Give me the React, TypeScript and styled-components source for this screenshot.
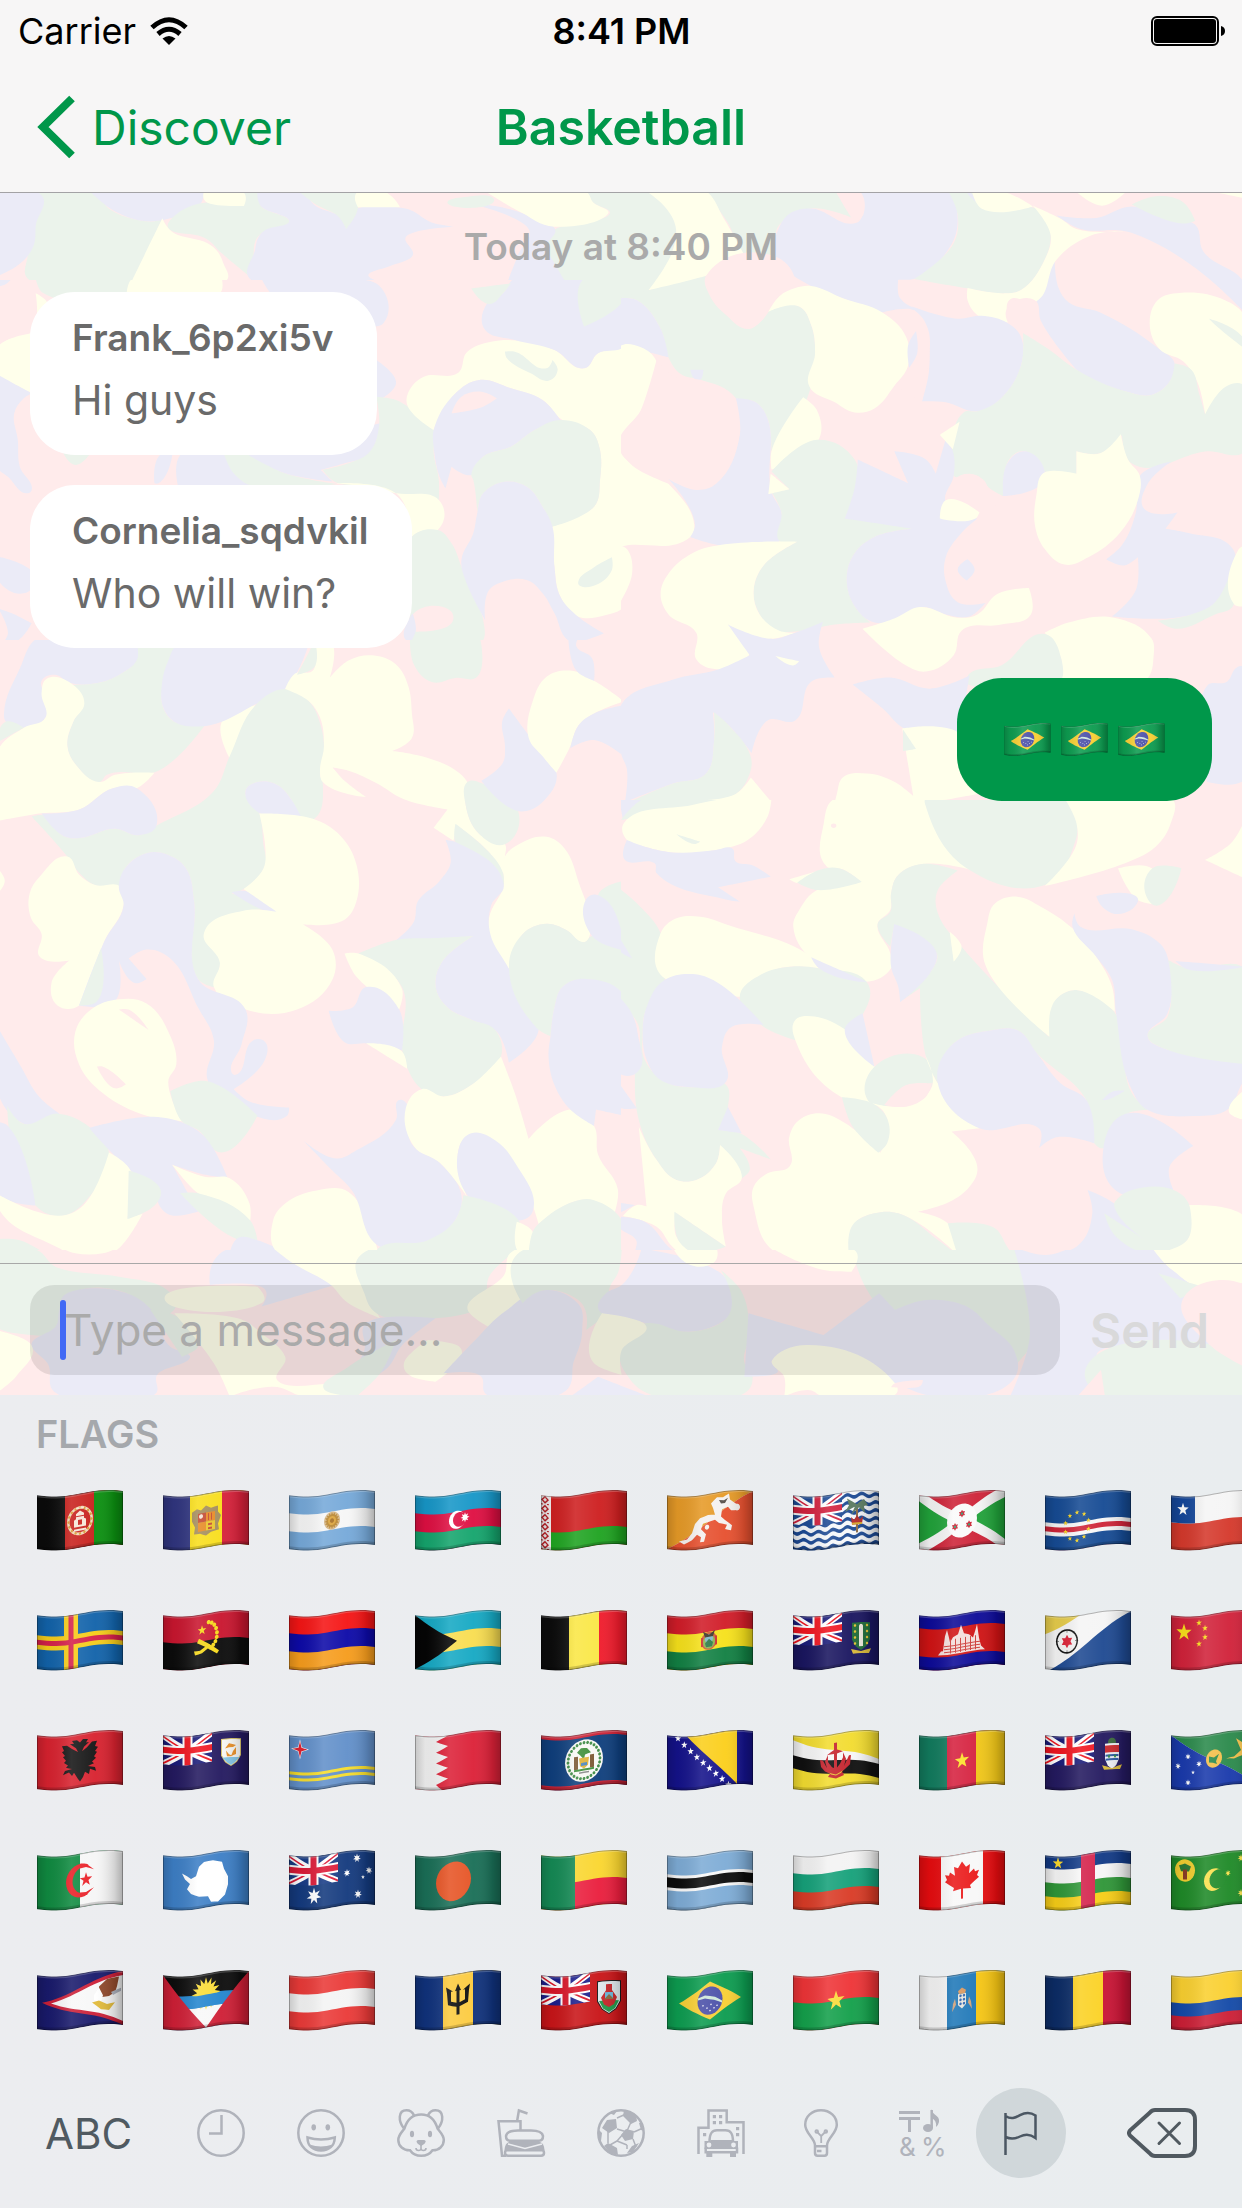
import React from "react";
import styled, { createGlobalStyle } from "styled-components";

const GREEN = "#00974a";

const GlobalStyle = createGlobalStyle`
  * { box-sizing: border-box; }
  body { margin: 0; background: #ebedf0; }
  body, button, input { font-family: Inter, "Liberation Sans", sans-serif; }
  button { border: 0; padding: 0; background: none; cursor: pointer; }
`;

/* ---------- camouflage wallpaper ---------- */

const INK: Record<string, string> = { p: "#ffebeb", b: "#ebebf7", g: "#ebf3eb", y: "#ffffeb" };

/* Closed smooth curve through the listed points; sharp turns stay corners. */
function smooth(src: string): string {
  const pts = src.trim().split(/\s+/).map((s) => s.split(",").map(Number));
  const n = pts.length;
  const at = (i: number) => pts[(i + n) % n];
  const tangent = (i: number) => {
    const [ax, ay] = at(i - 1);
    const [bx, by] = at(i);
    const [cx, cy] = at(i + 1);
    const ux = bx - ax, uy = by - ay, vx = cx - bx, vy = cy - by;
    const lu = Math.hypot(ux, uy) || 1, lv = Math.hypot(vx, vy) || 1;
    const dot = (ux * vx + uy * vy) / (lu * lv);
    if (dot < -0.05) return [0, 0, 0, 0];
    const tx = ux / lu + vx / lv, ty = uy / lu + vy / lv;
    const l = Math.hypot(tx, ty) || 1;
    return [(tx / l) * lu * 0.36, (ty / l) * lu * 0.36, (tx / l) * lv * 0.36, (ty / l) * lv * 0.36];
  };
  let d = `M${pts[0][0]} ${pts[0][1]}`;
  for (let i = 0; i < n; i++) {
    const a = at(i), b = at(i + 1), ta = tangent(i), tb = tangent(i + 1);
    d += `C${(a[0] + ta[2]).toFixed(1)} ${(a[1] + ta[3]).toFixed(1)} ${(b[0] - tb[0]).toFixed(1)} ${(b[1] - tb[1]).toFixed(1)} ${b[0]} ${b[1]}`;
  }
  return d + "Z";
}

type Patch = { x: number; y: number; w: number; h: number; box: string; shapes: string };

const PATCHES: Patch[] = [
  {
    x: 0, y: 193, w: 621, h: 87, box: "0 579 784 261",
    shapes: `
g 42,570 112,570 140,630 165,655 195,664 205,655 185,760 165,850 45,850 35,760
b -5,570 42,570 45,680 40,750 20,800 -5,830
b 112,570 258,570 250,620 215,655 185,664 150,640
g 258,608 308,618 303,570 325,570 330,620 365,665 330,700 320,770 325,850 280,760 255,710 215,690 217,655
y 258,570 303,570 308,618 262,608
y 205,655 220,700 262,730 282,790 280,850 165,850
b 325,570 375,570 400,620 430,650 437,688 452,625 510,625 548,670 572,680 515,705 520,770 490,800 465,825 485,850 325,850 322,750 335,690 365,665 330,620
g 375,570 455,570 450,640 437,688 425,645 400,615
y 455,570 480,570 505,622 452,622
g 735,570 790,570 790,850 720,850 695,780 700,690 770,640 750,610
b 590,608 625,618 660,640 700,684 690,740 700,790 715,850 640,850 655,760 668,690 640,645
g 565,605 590,590 620,590 620,612 575,620
y 610,570 735,570 750,610 768,640 700,680 660,640`,
  },
  {
    x: 0, y: 280, w: 621, h: 360, box: "0 0 1568 1080",
    shapes: `
b -5,-5 30,-5 15,12 -5,20
y 90,40 120,70 80,165 -5,200 20,180 75,165
g 90,-5 335,-5 320,40 110,40
y 335,-5 560,-5 555,40 320,40
b 660,-5 890,-5 960,20 968,130 940,140 700,60
y -5,200 80,160 90,340 60,330 -5,280
b -5,285 80,340 60,355 36,400 45,480 50,560 80,630 70,640 20,590 -5,565
b -5,830 90,890 60,940 -5,900
b -5,985 30,1000 80,1030 40,1085 10,1085 20,1060
g 160,520 225,525 190,555
b 410,520 435,525 400,610 390,610
b 460,520 565,520 590,570 640,620 450,620
g 565,520 620,520 720,580 850,612 640,620 590,580
b 620,520 960,430 930,525 870,550 810,570 840,605 720,580
b 950,240 1000,310 950,365
g 950,350 1000,360 1060,410 1095,450 1095,520 1108,600 1108,660 1000,640 920,620 845,605 815,570 880,550 930,520 957,440
y 1155,280 1180,215 1240,185 1330,185 1400,210 1475,265 1510,220 1575,200 1575,980 1530,1005 1460,1010 1415,950 1400,860 1395,740 1500,680 1515,600 1513,500 1490,450 1420,420 1370,360 1290,325 1210,300 1150,340 1095,450 1030,380 1030,340 1070,290
g 1275,215 1300,215 1380,265 1395,240 1408,270 1385,302 1340,280 1280,235
b 1095,450 1150,340 1210,300 1290,325 1370,360 1415,420 1350,450 1290,500 1220,530 1190,585 1140,560 1125,625 1110,590 1095,500
p 1140,400 1165,350 1215,335 1255,355 1220,380
g 1415,420 1490,450 1513,500 1515,600 1500,680 1395,740 1370,680 1330,620 1275,605 1220,640 1205,700 1195,600 1190,585 1220,530 1290,500 1350,450
y 845,610 920,620 1000,640 1108,660 1105,750 1060,755 1040,770 1000,640
g 1040,770 1105,750 1140,790 1165,860 1190,940 1220,1020 1212,1090 1035,1090 1035,1000
p 1045,1000 1135,990 1140,1030 1050,1055
b 1020,1070 1042,1000 1050,1050 1035,1090
b 1275,605 1330,620 1370,680 1395,740 1400,860 1415,950 1460,1010 1525,1060 1462,1085 1440,1085 1400,1000 1370,940 1330,900 1270,905 1235,930 1225,1020 1175,900 1165,840 1195,760 1205,700 1220,640
b 1300,-5 1470,-5 1475,140 1540,70 1575,60 1575,200 1510,220 1475,265 1400,210 1300,180 1225,150 1230,70 1270,40
g 1475,-5 1575,-5 1575,60 1475,140
g 1190,25 1290,10 1270,40 1235,72
g 1460,905 1500,862 1545,832 1545,870 1510,912 1465,918`,
  },
  {
    x: 0, y: 640, w: 621, h: 610, box: "0 0 1568 1494",
    shapes: `
b 95,-5 345,-5 355,40 310,80 250,105 175,105 140,85 105,100 115,140 115,190 60,215 15,200 10,180 50,70
g 345,50 355,0 450,0 450,20 415,100 410,160 440,200 520,205 400,320 270,330 250,348 195,310 170,260 185,200 210,155 180,110 250,105 310,80
y 560,200 645,160 580,290
b 450,10 780,10 760,60 720,120 640,160 560,200 500,212 440,200 412,165 410,100 425,50
y -5,270 60,215 115,190 105,130 118,95 185,110 213,155 185,200 170,260 195,310 250,348 290,330 390,325 345,363 285,363 200,415 100,425 -5,443
g -5,230 15,200 60,215 -5,250
g 80,432 110,430 160,480 200,485 290,462 350,478 395,455 540,370 580,285 645,160 720,120 780,150 810,210 818,270 808,330 815,350 790,440 755,430 735,390 700,355 650,348 620,370 655,425 665,500 670,550 615,610 585,620 690,660 620,665 515,718 555,770 540,850 500,830 490,640 470,560 420,525 370,522 315,560 305,600 240,600 200,570 170,530
b 105,425 200,415 285,363 345,363 395,455 350,478 290,462 200,485 160,480
b 620,370 650,348 700,355 735,390 760,432 700,430 655,424
y 795,-5 833,-5 833,92 880,50 945,38 1000,60 1030,110 1040,180 1040,240 990,272 1180,348 1175,400 1210,475 1275,500 1275,530 1270,575 1235,520 1155,455 1145,492 1095,460 1130,415 1020,390 950,350 880,320 840,312 870,345 925,385 815,348 808,320 818,260 808,190 780,150 720,120 745,82 790,75
g 780,30 795,0 795,65 750,85
g 1035,-5 1212,-5 1205,90 1150,93 1090,103 1045,60
g 1180,348 1215,350 1310,425 1275,500 1210,475 1175,400
b 1215,345 1270,300 1275,260 1268,200 1285,168 1340,240 1405,325 1390,375 1315,420
y 1335,240 1345,150 1380,90 1440,75 1500,100 1575,150 1500,180 1460,210 1440,260 1405,325 1370,285
b 1435,-5 1460,-5 1455,15 1495,45 1500,100 1455,75
b 1575,160 1500,180 1460,210 1440,265 1500,245 1575,285
y 1275,530 1310,500 1380,482 1425,510 1460,590 1490,720 1475,740 1430,710 1380,695 1320,720 1285,805 1240,740 1235,680 1272,600 1270,560
g 1150,450 1235,520 1270,570 1272,600 1150,495
b 1125,490 1150,495 1272,600 1240,650 1238,720 1285,805 1360,955 1285,1035 1255,960 1190,930 1130,900 1100,850 1115,790 1195,725 1100,735 1000,735 1045,690 1055,640 1110,590 1138,545
b 585,618 620,615 705,665 690,668
y 655,425 790,438 860,480 900,550 900,640 870,685 765,697 840,760 840,830 750,905 620,905 540,850 555,790 515,718 620,662 700,666 615,610 665,560 670,510
g 905,768 1000,735 1100,730 1195,725 1115,790 1100,850 1130,900 1190,930 1250,955 1265,1020 1190,1090 1120,1118 1065,1100 1025,1040 1015,1000 1015,850
y 870,768 905,768 1015,855 1008,905 900,825
b 925,850 1008,905 1015,1005 925,988 870,985 830,908 890,900
y 925,988 1015,1008 1028,1050
y 75,620 100,580 170,530 200,575 240,600 305,605 312,650 265,735 200,895 145,895 130,840 175,785 100,775 105,720 78,680
y -5,560 12,590 -5,620
b 300,605 315,560 370,522 420,525 470,560 490,640 500,830 620,905 610,990 585,1060 595,1065 640,980 670,985 668,1030 590,1100 630,1130 730,1145 725,1165 640,1165 525,1080 540,980 500,900 430,780 370,758 325,780 370,830 340,840 300,785 290,885 200,895 265,735 312,650
g 200,895 255,755 245,885
y 190,960 230,905 300,880 370,890 430,970 445,1040 425,1080 460,1178 370,1165 260,1110 200,1040
p 300,905 325,905 375,955
p 245,1045 260,1045 318,1088 290,1098
g 430,1105 520,1080 650,1165 560,1255 500,1200 460,1180
b -5,950 50,1040 100,1120 150,1160 100,1188 50,1180 -5,1110
g 18,1140 60,1185 145,1160 225,1192 275,1255 220,1370 160,1410 95,1390 30,1240
b -5,1180 20,1190 90,1385 -5,1355
b 225,1195 370,1168 460,1182 520,1220 575,1318 520,1310 435,1285 500,1400 430,1408 400,1380 400,1345 330,1300
y 275,1255 330,1300 322,1415 360,1405 300,1490 230,1525 150,1490 -5,1390 -5,1358 150,1410 210,1385
g 325,1300 405,1345 395,1380 322,1418
y 435,1285 520,1315 580,1318 630,1380 632,1422 500,1355
g 455,1355 500,1355 632,1422 650,1470 600,1468
g -5,1467 50,1470 110,1500 -5,1500
b 600,1465 650,1470 720,1500 580,1500
y 690,1420 720,1380 800,1348 880,1352 955,1500 700,1500
b 765,1225 850,1270 900,1250 1000,1175 1005,1128 1022,1130 1040,1235 1110,1280 1165,1360 1150,1420 1090,1470 1010,1492 950,1480 890,1350 840,1300
y 1025,1145 1065,1100 1120,1118 1190,1090 1265,1020 1300,1110 1335,1222 1445,1150 1500,1190 1510,1260 1560,1345 1550,1410 1500,1375 1450,1375 1360,1430 1300,1290 1200,1210 1160,1240 1180,1365 1110,1280 1045,1240
b 1160,1240 1190,1208 1250,1225 1300,1280 1345,1400 1310,1422 1180,1360
g 955,1490 1080,1470 1150,1420 1170,1360 1310,1422 1315,1500 950,1500
y 1305,1425 1345,1450 1335,1500 1310,1500
g 1345,1450 1360,1430 1450,1375 1500,1372 1575,1430 1575,1500 1335,1500
g 1285,800 1320,720 1380,695 1430,710 1475,740 1495,725 1575,760 1575,865 1480,830 1420,850 1400,900 1390,970 1355,950
b 1390,970 1400,900 1420,850 1480,830 1575,870 1575,1165 1505,1150 1500,1190 1440,1150 1400,1090 1385,1020
g 1510,625 1575,590 1575,740
b 1480,635 1510,625 1575,735 1575,760 1495,725`,
  },
  {
    x: 621, y: 193, w: 621, h: 607, box: "0 7 1568 1488",
    shapes: `
g -5,0 70,0 130,50 140,100 70,245 -5,265
g 210,0 540,0 600,75 480,45 400,85 390,110 395,165 320,170 270,80
g -5,265 70,245 215,212 270,310 320,340 355,320 372,298 450,285 480,330 490,400 470,510 380,640 370,560 340,520 290,510 200,465 150,450 120,410 100,340 40,270
y 60,0 210,0 260,70 320,175 215,210 70,245 130,150 138,90 110,40
b 390,160 400,90 430,55 480,45 595,80 610,60 600,0 825,0 850,70 830,140 740,218 700,220 705,260 760,290 660,300 560,265 480,235
p 540,0 600,0 612,60 590,80 570,50
p 215,210 395,165 438,240 400,260 355,320 320,340 270,310 225,260
p 700,220 780,222 880,240 905,310 850,318 780,300 705,265
b 175,440 208,440 200,465 185,462
g 825,0 880,0 910,40 1020,38 1070,60 1085,110 1070,170 1010,245 970,253 870,240 740,218 840,130 850,60
b 870,0 900,20 915,42 880,15
y 885,0 975,7 1040,40 910,45
b 1050,272 1095,170 1105,240 1130,275 1210,300 1360,390 1398,425 1385,470 1340,502 1280,495 1150,440 1080,370 1055,310
y 1040,38 1110,70 1150,95 1270,100 1190,110 1100,170 1050,272 980,270 980,325 905,310 875,270 875,240 970,253 1010,245 1070,170 1085,110
p 975,290 1045,270 1060,320 1150,440 1050,380 980,330
b 1100,62 1200,68 1290,40 1380,70 1450,85 1470,150 1575,230 1575,300 1500,230 1420,170 1340,125 1270,100 1160,95
y 1145,0 1280,0 1215,38
g 1290,35 1350,15 1420,30 1450,75 1420,82
y 1500,5 1575,5 1575,20
y 1335,330 1355,270 1410,252 1525,270 1575,310 1575,480 1525,490 1475,550 1455,470 1420,420 1360,390
g 1485,315 1575,370 1570,385 1500,330
b 735,285 850,315 910,308 975,325 1010,360 1010,430 960,510 900,542 820,520 760,518 778,440 772,350
p 660,300 700,292 740,295 775,340 775,430 760,518 690,480 725,430 720,360
y 372,298 400,260 440,240 480,235 560,265 660,300 720,360 725,430 690,480 640,535 590,545 540,520 475,480 490,400 480,330 450,285
b 725,380 745,345 748,400 728,435
g 1015,350 1080,390 1150,440 1280,495 1340,502 1385,470 1398,425 1440,440 1460,500 1475,550 1530,480 1575,480 1575,640 1480,640 1290,670 1265,600 1210,645 1150,640 1150,695 1070,690 1020,640 980,660 965,750 930,730 900,700 840,700 835,650 865,545 900,542 960,510 1010,430
p 820,760 840,710 880,695 915,710 935,740 965,750 900,800
b -5,265 40,270 100,340 120,410 20,385 -5,380
y -5,385 50,385 90,420 90,470 50,540 -5,630 120,720 185,820 175,850 20,870 -5,870
y -5,870 15,880 28,940 -5,1015
p 90,415 140,460 200,465 290,510 305,580 270,660 240,720 190,735 120,720 0,630 50,540
b 290,510 340,520 370,560 380,740 405,790 400,860 250,870 175,850 187,820 120,708 190,735 240,720 300,600
y 460,508 495,540 500,610 380,685 380,640
g 380,690 495,612 590,660 598,720 565,805 640,795 735,830 640,850 590,890 570,950 590,1020 630,1060 540,1065 440,1082 390,1080 345,1030 335,980 360,920 445,862 400,860 405,790 380,740 425,733
y 378,695 425,733 372,745
y 100,990 120,940 180,890 250,870 445,862 360,920 335,980 350,1040 400,1080 440,1085 380,1100 320,1090 270,1065 325,1130 300,1160 245,1175 190,1150 190,1085 120,1040
b 598,660 725,718 690,640 770,660 795,695 820,610 838,640 840,700 820,765 900,805 860,840 820,900 820,960 850,1010 920,1012 880,1045 820,1040 760,1022 700,1050 640,1060 590,1020 570,950 590,890 640,850 735,830 565,805 590,730
y 805,600 855,568 838,635
y 820,760 905,790 895,805 805,805
b 1020,640 1070,690 1055,725 965,750 975,670
b 850,930 875,905 893,930 873,957
b 1310,700 1390,665 1330,720 1320,780 1405,790 1375,830 1430,840 1545,880 1540,960 1490,1020 1400,1048 1240,1045 1300,980 1305,900 1270,920 1225,905 1265,870 1300,790
y 1060,700 1075,690 1150,695 1150,640 1210,645 1262,598 1280,660 1310,700 1305,760 1260,840 1180,900 1120,918 1070,880 1045,820 1050,740
g 1545,920 1545,1020 1500,1040 1400,1075 1355,1055 1440,1040 1500,1010
y 1560,880 1575,870 1575,1020 1548,1015
b 0,1262 130,1200 245,1175 325,1140 270,1065 380,1100 440,1085 510,1058 500,1120 540,1195 480,1205 440,1300 370,1300 330,1380 270,1310 232,1280 235,1350 215,1430 130,1455 10,1500 15,1420 0,1380
g 235,1280 270,1310 328,1390 325,1430 290,1480 180,1500 20,1500 130,1455 215,1430 235,1350
y 610,1075 690,1050 755,1022 850,1048 900,1040 950,990 1030,975 1035,1040 960,1065 860,1080 840,1140 770,1180 720,1165
y 1070,1085 1130,1060 1245,1048 1340,1100 1345,1140 1325,1200 1110,1200 1112,1150
g 1070,1088 1112,1150 1105,1210 870,1210 880,1185 960,1165
y 390,1142 450,1155 435,1165
y 180,1495 290,1480 328,1440 380,1500
b 585,1212 680,1195 780,1222 880,1190 870,1250 860,1335 720,1322 660,1270
y 545,1480 560,1440 620,1430 690,1450 738,1485 710,1320 860,1335 900,1480 770,1500 540,1500
g 712,1322 745,1370 712,1375
b 1480,1215 1530,1205 1555,1170 1575,1170 1575,1445 1480,1450`,
  },
  {
    x: 621, y: 800, w: 621, h: 450, box: "0 0 1568 1350",
    shapes: `
b -5,-5 60,-5 5,60
g 0,60 60,-5 270,-5 180,20
y 8,68 180,15 275,-5 380,-5 370,50 320,120 240,150 140,158 60,140 15,120
g 140,103 200,125 185,132
b 15,120 60,140 140,158 240,150 280,145 290,185 330,195 378,230 245,262 300,305 270,300 90,220 85,190 10,180
y 540,-5 770,-5 880,208 760,192 700,225 682,280 680,330 648,372 680,460 682,505 620,545 480,475 435,380 450,330 495,270 605,245 560,208 520,200 512,70
y 425,238 520,205 450,250
g 445,248 500,210 550,205 608,246 495,270
p 532,72 542,72 542,82 532,82
g 770,-5 1120,-5 1150,60 1148,120 1070,255 880,210 770,20
y 1120,-5 1390,-5 1388,70 1350,140 1260,195 1070,258 1148,140 1150,70
y 1575,60 1540,130 1475,180 1575,235
g 682,280 700,225 760,192 850,212 800,270 800,340 860,440 1080,710 1085,620 1110,585 1150,570 1245,635 1290,880 1330,930 1280,940 1218,1045 1195,1030 1175,900 1050,760 1000,690 940,690 840,730 800,850 770,770 755,565 705,605 790,500 797,460 690,375 680,440 648,372 680,335
y 830,395 860,440 840,485
b 690,372 760,410 797,460 780,520 705,607 700,560 682,500
y 920,495 925,370 945,310 1000,290 1060,320 1140,385 1200,470 1240,560 1247,635 1150,570 1105,590 1085,630 1082,710
b 1145,340 1160,380 1290,388 1360,430 1382,480 1380,640 1330,710 1370,745 1575,792 1560,870 1530,930 1450,948 1330,930 1290,870 1250,640 1240,540 1200,470 1140,380
g 1382,480 1430,505 1575,505 1575,792 1370,745 1330,708 1380,650
b 1400,483 1575,500 1430,508
y 1255,205 1340,205 1340,312 1305,300
g 1342,205 1415,205 1360,315 1340,312
b 1200,288 1300,288 1305,305 1255,342 1215,320
g -5,265 40,310 100,400 110,540 60,640 55,700 60,780 120,850 180,862 260,850 270,920 245,990 300,1000 378,1078 300,1045 325,1110 305,1135 250,1035 240,1090 190,1140 140,1140 90,1080 45,960 35,820 45,680 -5,590
b -5,590 25,635 42,700 38,820 -5,820
b -5,850 40,925 -5,920
b -5,410 28,475 -5,450
y 100,400 140,355 200,350 270,375 480,470 500,505 400,505 300,590 200,530 110,535
g 300,590 360,520 430,500 500,505 620,545 612,640 565,688 460,650 440,720 360,680
b 480,472 620,545 600,545 500,505
b 55,700 65,620 110,540 180,522 240,545 360,675 280,680 255,740 262,850 180,862 100,840 65,780
y 440,720 440,660 470,648 565,688 640,800 630,908 555,890
b 565,688 610,640 640,800
g 640,800 760,770 785,855 680,915 630,910
y 425,1100 425,1010 450,960 500,940 560,965 655,1058 675,1000 660,930 630,908 720,918 785,860 768,765 800,850 905,985 835,995 880,1050 900,1110 880,1160 830,1205 750,1235 825,1270 850,1365 700,1240 640,1240 590,1270 580,1360 395,1360 335,1220 335,1160 370,1120
p 665,915 720,855 785,850 770,890 720,920
g 558,892 630,908 670,950 672,1030 650,1058 585,980
b 800,850 840,730 940,690 1000,690 1050,760 1110,850 1175,900 1195,1030 1100,1012 1055,1045 1055,985 905,985
b 1215,900 1240,875 1272,872 1225,900
b 1218,1045 1280,940 1445,1038 1385,1100 1395,1170 1260,1180
y 1535,935 1575,870 1575,960
b 1178,1170 1245,1210 1330,1330 1380,1360 970,1360 1060,1362 1150,1340 1190,1240
g 1255,1195 1290,1170 1395,1170 1435,1215 1430,1320 1345,1362 1250,1310 1220,1240 1330,1325 1245,1215
y 1435,1215 1575,1250 1575,1360 1345,1362 1430,1320
g 575,1360 585,1275 640,1240 700,1240 800,1320 850,1365 825,1270 940,1282 975,1340 985,1360
y 45,980 90,1080 140,1140 190,1140 240,1090 250,1035 305,1135 265,1180 255,1260 265,1340 140,1240 140,1310 210,1365 245,1350 200,1395 130,1340 90,1280 5,1248 40,1215 65,1220
g 135,1235 265,1340 240,1350 210,1365 150,1330
b -5,1250 60,1265 120,1340 150,1370 40,1370 38,1320 -5,1280
b -5,1208 35,1215 -5,1240
b 245,990 270,920 305,1000`,
  },
  {
    x: 0, y: 1250, w: 1242, h: 145, box: "0 0 1568 435",
    shapes: `
g -5,-5 40,-5 75,55 150,80 205,110 215,190 190,200 160,130 110,115 80,160 70,250 20,250 -5,230
y 75,-10 150,-10 130,10 95,10
b 75,180 85,130 120,115 160,130 195,190 215,290 240,320 200,370 190,440 80,440 60,340 40,280 70,230
y -5,240 38,280 20,380 -5,430
b 265,105 290,-5 345,-5 430,100 330,170 330,110
y 212,130 325,110 330,160 220,170
y 345,-5 470,-5 460,100 480,205 440,160 415,100 370,40
g 190,180 215,190 250,290 230,320
y 220,190 300,205 330,250 360,320 355,400 440,410 435,440 385,440 345,410 290,440 270,340
g 470,-5 655,-5 620,70 600,180 550,205 490,205 460,130
b 470,210 550,205 510,280 480,370 440,400 460,300
g 410,420 440,350 500,270 480,370 450,440
y 655,-5 665,-5 655,180 620,235 590,175 635,80
y 510,340 540,270 580,290 550,395 520,380
b 560,370 600,270 640,180 690,120 725,150 735,240 725,330 700,440 620,440 600,370
g 665,-5 785,-5 780,70 770,110 765,190 740,240 730,150 690,120 660,160
b 785,105 810,-5 860,20 910,70 925,150 915,210 870,245 800,210 760,190 765,130
y 850,-5 905,-5 900,40 880,50
g 910,60 935,120 945,260 940,340 950,370 930,440 830,440 790,370 785,290 815,220 870,245 915,210
y 760,190 815,225 785,300 785,375 750,340
b 720,440 755,380 820,440
g 1075,-5 1280,-5 1300,100 1308,260 1280,350 1240,230 1180,150 1120,210 1090,100
b 945,190 1040,255 1110,130 1130,180 1170,150 1210,160 1250,230 1280,300 1275,400 1235,440 1180,440 1130,400 1020,290 975,330 980,370 940,380
y 975,330 1020,285 1130,400 1125,440 1040,440 1020,420 990,440 990,380
y 975,-5 1075,-5 1075,65 1040,60
p 1130,400 1165,390 1160,410 1125,412
b 1280,-5 1455,-5 1490,70 1510,150 1500,200 1520,200 1520,290 1390,300 1395,370 1360,440 1275,440 1300,260
p 1285,-5 1350,-5 1320,15
y 1455,-5 1575,-5 1575,90 1525,115 1480,60
g 1462,70 1525,115 1490,145
g 1395,300 1520,280 1575,360 1575,440 1395,440
p 1360,440 1390,360 1395,440
p 1495,140 1540,90 1575,110 1575,355 1530,290`,
  },
];

const WALLPAPER = PATCHES.map((patch) => ({
  ...patch,
  paths: patch.shapes.trim().split("\n").map((line) => ({ fill: INK[line[0]], d: smooth(line.slice(2)) })),
}));

const WallpaperSvg = styled.svg`
  position: absolute;
  inset: 0;
  width: 100%;
  height: 100%;
`;

const Wallpaper = () => (
  <WallpaperSvg viewBox="0 193 1242 1202" preserveAspectRatio="xMidYMid slice" aria-hidden="true">
    <rect x="0" y="193" width="1242" height="1202" fill={INK.p} />
    {WALLPAPER.map((w) => (
      <svg key={`${w.x}-${w.y}`} x={w.x} y={w.y} width={w.w} height={w.h} viewBox={w.box} preserveAspectRatio="none">
        {w.paths.map((s, i) => <path key={i} fill={s.fill} d={s.d} />)}
      </svg>
    ))}
  </WallpaperSvg>
);

/* ---------- waving flags ---------- */

const FW = 86;
const FH = 54;
const TALL = 1.12;
type Pt = [number, number];
type Layer = { c: string; d: string };

const sway = (x: number) => 3.3 + 3.3 * Math.cos((Math.PI * (x - 17)) / 55);

function waved(pts: Pt[]): string {
  const out: string[] = [];
  pts.forEach(([x, y], i) => {
    const [nx, ny] = pts[(i + 1) % pts.length];
    const steps = Math.max(1, Math.ceil(Math.abs(nx - x) / 5));
    for (let s = 0; s < steps; s++) {
      const px = x + ((nx - x) * s) / steps;
      const py = y + ((ny - y) * s) / steps;
      out.push(`${px.toFixed(2)} ${(py + sway(px)).toFixed(2)}`);
    }
  });
  return `M${out.join("L")}Z`;
}

const poly = (c: string, ...n: number[]): Layer => {
  const pts: Pt[] = [];
  for (let i = 0; i < n.length; i += 2) pts.push([n[i], n[i + 1]]);
  return { c, d: waved(pts) };
};
const rect = (c: string, x: number, y: number, w: number, h: number) => poly(c, x, y, x + w, y, x + w, y + h, x, y + h);
const fillAll = (c: string) => rect(c, 0, 0, FW, FH);
const bands = (vertical: boolean, spec: [string, number][]): Layer[] => {
  const total = spec.reduce((s, [, n]) => s + n, 0);
  let at = 0;
  return spec.map(([c, n]) => {
    const from = at / total;
    at += n;
    return vertical
      ? rect(c, from * FW, 0, FW * (1 - from), FH)
      : rect(c, 0, from * FH, FW, FH * (1 - from));
  });
};
const rows = (...spec: [string, number][]) => bands(false, spec);
const cols = (...spec: [string, number][]) => bands(true, spec);
const disc = (c: string, x: number, y: number, rx: number, ry = rx * TALL): Layer => {
  const n: number[] = [];
  for (let i = 0; i < 28; i++) n.push(x + rx * Math.cos((i * Math.PI) / 14), y + ry * Math.sin((i * Math.PI) / 14));
  return poly(c, ...n);
};
const star = (c: string, x: number, y: number, r: number, tips = 5, inner = 0.4): Layer => {
  const n: number[] = [];
  for (let i = 0; i < tips * 2; i++) {
    const q = i % 2 ? r * inner : r;
    const a = -Math.PI / 2 + (i * Math.PI) / tips;
    n.push(x + q * Math.cos(a), y + q * TALL * Math.sin(a));
  }
  return poly(c, ...n);
};
const jack = (blue: string, red = "#e8112d"): Layer[] => [
  rect(blue, 0, 0, 49, 29),
  poly("#fff", 0, 0, 6, 0, 49, 25, 49, 29, 43, 29, 0, 4),
  poly("#fff", 49, 0, 43, 0, 0, 25, 0, 29, 6, 29, 49, 4),
  poly(red, 0, 0, 22, 13, 19, 13, 0, 2),
  poly(red, 49, 29, 27, 16, 30, 16, 49, 27),
  poly(red, 49, 0, 27, 13, 30, 13, 49, 2),
  poly(red, 0, 29, 22, 16, 19, 16, 0, 27),
  rect("#fff", 19.5, 0, 10, 29),
  rect("#fff", 0, 9.5, 49, 10),
  rect(red, 21.5, 0, 6, 29),
  rect(red, 0, 11.5, 49, 6),
];
const shield = (c: string, x: number, y: number, w: number, h: number) =>
  poly(c, x - w, y - h, x + w, y - h, x + w, y + h * 0.2, x + w * 0.6, y + h * 0.7, x, y + h, x - w * 0.6, y + h * 0.7, x - w, y + h * 0.2);

const ring = (c: string, x: number, y: number, r: number, dot: number, count: number) =>
  Array.from({ length: count }, (_, i) =>
    disc(c, x + r * Math.cos((i * 2 * Math.PI) / count), y + r * TALL * Math.sin((i * 2 * Math.PI) / count), dot));

const ripple = (c: string, y: number): Layer => {
  const n: number[] = [];
  for (let x = 0; x <= 86; x += 2) n.push(x, y + 1.6 * Math.sin(x / 2.3));
  for (let x = 86; x >= 0; x -= 2) n.push(x, y + 3.6 + 1.6 * Math.sin(x / 2.3));
  return poly(c, ...n);
};

const FLAGS: [string, Layer[]][] = [
  ["Afghanistan", [...cols(["#0b0b0b", 28], ["#c8201c", 29], ["#0b9010", 29]), disc("#f0d9b8", 43, 27, 13), disc("#c8201c", 43, 27, 10.5), ...ring("#d99a35", 43, 27, 11.5, 1.2, 16), poly("#f6e6d8", 37, 33, 37, 26, 39, 25, 39, 20, 43, 17, 47, 20, 47, 25, 49, 26, 49, 33), rect("#c8201c", 41, 26, 4, 5), rect("#c8201c", 39, 22, 8, 1), rect("#f6e6d8", 37, 35, 12, 2), rect("#f6e6d8", 39, 14, 8, 1)]],
  ["Andorra", [...cols(["#30357f", 27], ["#f8de1c", 32], ["#d8213a", 27]), poly("#a48d5c", 29, 17, 34, 14, 38, 16, 43, 12, 48, 15, 55, 14, 55, 20, 58, 24, 55, 32, 56, 38, 48, 39, 43, 42, 37, 39, 31, 39, 32, 32, 29, 26), rect("#c44a32", 35, 19, 8, 9), rect("#e78b25", 43, 19, 9, 9), rect("#e78b25", 35, 28, 8, 9), rect("#e9c52b", 43, 28, 9, 9), rect("#c44a32", 45, 20, 1, 7), rect("#c44a32", 48, 20, 1, 7), disc("#f4e3d4", 38, 22, 2), rect("#c44a32", 45, 30, 4, 2), rect("#c44a32", 45, 34, 4, 2)]],
  ["Argentina", [...rows(["#76a9d9", 18], ["#f6f6f6", 18], ["#76a9d9", 18]), disc("#d4b483", 43, 27, 8), star("#b8852f", 43, 27, 7.5, 16, 0.7), disc("#dba33a", 43, 27, 4), disc("#a66e22", 43, 27, 2)]],
  ["Azerbaijan", [...rows(["#1797c8", 18], ["#df0f42", 18], ["#15a56d", 18]), disc("#fff", 42, 26, 8), disc("#df0f42", 44.5, 26, 6.5), star("#fff", 50, 25, 4.5, 8, 0.5)]],
  ["Belarus", [...rows(["#ce1f20", 36], ["#1fa321", 18]), rect("#f5eeee", 0, 0, 10, FH), ...[0, 9, 18, 27, 36, 45].flatMap((y) => [poly("#bd2228", 0, y + 4, 4, y, 8, y + 4, 4, y + 8), poly("#f5eeee", 2, y + 4, 4, y + 2, 6, y + 4, 4, y + 6), rect("#bd2228", 0, y + 8, 2, 1), rect("#bd2228", 6, y + 8, 2, 1)])]],
  ["Bhutan", [poly("#e69a27", 0, 0, FW, 0, 0, FH), poly("#e6502f", FW, 0, FW, FH, 0, FH), poly("#f4f1ef", 12, 45, 20, 43, 25, 37, 28, 28, 33, 23, 41, 21, 48, 22, 46, 15, 44, 10, 50, 5, 56, 6, 62, 3, 63, 9, 71, 15, 70, 20, 64, 20, 61, 16, 55, 18, 54, 25, 58, 29, 65, 35, 64, 40, 58, 38, 60, 34, 52, 31, 48, 27, 42, 28, 36, 29, 34, 34, 39, 40, 37, 47, 33, 47, 34, 42, 30, 39, 25, 44, 17, 48), poly("#57504a", 52, 8, 57, 9, 61, 7, 58, 12, 54, 12), disc("#f4f1ef", 40, 33, 2.2), disc("#f4f1ef", 70, 17, 3)]],
  ["British Indian Ocean Territory", [fillAll("#f5f7fa"), ...[3, 11, 19, 27, 35, 43, 51].map((y) => ripple("#1d4a94", y)), ...jack("#1d4a94", "#d2213e"), rect("#8b6a45", 63, 14, 2, 28), poly("#5b7b61", 64, 14, 54, 7, 56, 14, 52, 20, 62, 16, 58, 24, 66, 17, 72, 23, 71, 16, 75, 15, 71, 9, 66, 12), poly("#b52a2a", 58, 26, 61, 29, 64, 25, 67, 29, 70, 26, 69, 34, 59, 34), rect("#d9a92e", 59, 32, 10, 2)]],
  ["Burundi", [fillAll("#ce2338"), poly("#21a23a", 0, 0, 36, 27, 0, FH), poly("#21a23a", FW, 0, 50, 27, FW, FH), poly("#f4f4f4", 0, 0, 9, 0, FW, 48, FW, FH, 77, FH, 0, 6), poly("#f4f4f4", FW, 0, 77, 0, 0, 48, 0, FH, 9, FH, FW, 6), disc("#fafafa", 43, 27, 15), star("#cc2233", 43, 20, 3.5, 6, 0.6), star("#cc2233", 36, 32, 3.5, 6, 0.6), star("#cc2233", 50, 32, 3.5, 6, 0.6), disc("#22aa77", 43, 20, 1), disc("#22aa77", 36, 32, 1), disc("#22aa77", 50, 32, 1)]],
  ["Cape Verde", [...rows(["#164b94", 27], ["#f6f6f6", 4], ["#ce2438", 5], ["#f6f6f6", 4], ["#164b94", 14]), ...Array.from({ length: 10 }, (_, i) => star("#f5d21f", 32 + 12 * Math.sin((i * Math.PI) / 5), 31 - 14 * Math.cos((i * Math.PI) / 5), 2.4))]],
  ["Chile", [...rows(["#f5f5f5", 27], ["#d5392c", 27]), rect("#15479a", 0, 0, 24, 27), star("#fff", 12, 13, 6)]],

  ["Åland Islands", [fillAll("#1263aa"), rect("#f6cc19", 27, 0, 14, FH), rect("#f6cc19", 0, 20, FW, 14), rect("#d5204a", 31.5, 0, 5, FH), rect("#d5204a", 0, 24.5, FW, 5)]],
  ["Angola", [...rows(["#c9162f", 27], ["#0c0c0c", 27]), ...Array.from({ length: 9 }, (_, i) => disc("#f6d81a", 45 + 9 * Math.cos(-1.5 + i * 0.35), 22 + 13 * Math.sin(-1.5 + i * 0.35), 1.9)), star("#f6d81a", 39, 16, 4.5), poly("#f6d81a", 36, 24, 34, 28, 42, 33, 54, 42, 56, 39, 45, 30), poly("#f6d81a", 31, 36, 37, 36, 46, 31, 48, 33, 39, 39, 32, 40)]],
  ["Armenia", rows(["#f51515", 18], ["#0d0aa8", 18], ["#f69c1c", 18])],
  ["Bahamas", [...rows(["#16a9c4", 18], ["#f8dd50", 18], ["#16a9c4", 18]), poly("#050505", 0, 0, 42, 27, 0, FH)]],
  ["Belgium", cols(["#0c0c0c", 28], ["#fae745", 30], ["#f01c2c", 28])],
  ["Bolivia", [...rows(["#d11c28", 18], ["#f6e11b", 18], ["#128043", 18]), disc("#cd5a35", 42, 27, 8), disc("#87b44d", 42, 28, 6), disc("#7fb6c9", 42, 25, 4), poly("#3a3528", 36, 17, 42, 21, 48, 17, 46, 23, 38, 23), poly("#2a7a48", 38, 29, 42, 25, 46, 29, 45, 33, 39, 33), rect("#cf2a2a", 34, 23, 2, 9), rect("#cf2a2a", 48, 23, 2, 9)]],
  ["British Virgin Islands", [fillAll("#1a1660"), ...jack("#1a1b78", "#f01520"), shield("#1f6b38", 68, 26, 9, 14), rect("#eee9dd", 66, 16, 4, 20), disc("#eee9dd", 68, 16, 2), ...[15, 21, 27, 33].flatMap((y) => [disc("#e5c235", 62, y, 1.2), disc("#e5c235", 74, y, 1.2)]), poly("#d9b93a", 58, 38, 68, 41, 78, 38, 76, 43, 60, 43)]],
  ["Cambodia", [...rows(["#0d0b98", 13], ["#d01314", 28], ["#0d0b98", 13]), poly("#f3dedb", 19, 39, 22, 35, 24, 35, 25, 27, 26, 20, 28, 14, 30, 22, 31, 27, 34, 22, 39, 20, 42, 11, 45, 20, 50, 22, 54, 26, 56, 20, 58, 13, 60, 27, 62, 35, 66, 39), ...[30, 33, 36].map((y) => rect("#cd3c38", 25, y, 36, 1)), ...[31, 36, 41, 46, 51, 56].map((x) => rect("#cd3c38", x, 24, 1, 14))]],
  ["Caribbean Netherlands", [fillAll("#f5f5f5"), poly("#e6cc4b", 0, 0, 35, 0, 0, 19), poly("#1f4a92", FW, 0, FW, FH, 5, FH), disc("#111", 22, 25, 11), disc("#f5f5f5", 22, 25, 9.5), star("#111", 22, 25, 12, 4, 0.1), disc("#f5f5f5", 22, 25, 8), star("#dd2338", 22, 25, 6, 6, 0.58)]],
  ["China", [fillAll("#d1223a"), star("#f8df1b", 13, 16, 8), star("#f8df1b", 28, 7, 3), star("#f8df1b", 34, 13, 3), star("#f8df1b", 34, 22, 3), star("#f8df1b", 28, 28, 3)]],

  ["Albania", [fillAll("#d8222f"), poly("#151515", 43, 9, 40, 6, 35, 6, 37, 9, 33, 9, 39, 14, 41, 18, 35, 14, 30, 10, 25, 10, 27, 15, 25, 16, 28, 20, 26, 21, 29, 25, 27, 27, 31, 30, 29, 32, 35, 34, 28, 35, 26, 39, 32, 37, 35, 41, 37, 38, 41, 45, 43, 48, 46, 44, 48, 39, 52, 42, 53, 37, 59, 40, 58, 36, 51, 34, 57, 32, 55, 30, 59, 27, 57, 25, 60, 21, 58, 20, 61, 16, 58, 15, 60, 10, 55, 10, 50, 15, 45, 18, 47, 14, 52, 10, 49, 10, 51, 7, 46, 6)]],
  ["Anguilla", [fillAll("#241a60"), ...jack("#1a1b78", "#f01520"), shield("#d4c26a", 68, 22, 10, 14), shield("#f8f8f4", 68, 22, 9, 13), poly("#83c5e6", 59.5, 27, 76.5, 27, 72, 32, 68, 35, 64, 32), poly("#e99028", 62, 18, 66, 13, 73, 15, 70, 17, 66, 17), poly("#e99028", 73, 17, 73, 24, 68, 26, 70, 21), poly("#e99028", 63, 20, 66, 24, 70, 26, 64, 26)]],
  ["Aruba", [fillAll("#6290ca"), rect("#f6dc2d", 0, 36, FW, 3), rect("#f6dc2d", 0, 42, FW, 3), star("#fff", 11, 13, 9, 4, 0.3), star("#e12231", 11, 13, 7.5, 4, 0.28)]],
  ["Bahrain", [fillAll("#dc2138"), poly("#f1f1f1", 0, 0, 33, 0, 21, 5.4, 33, 10.8, 21, 16.2, 33, 21.6, 21, 27, 33, 32.4, 21, 37.8, 33, 43.2, 21, 48.6, 27, FH, 0, FH)]],
  ["Belize", [...rows(["#cd2336", 4], ["#0f3f7d", 46], ["#cd2336", 4]), disc("#f8f8f4", 43, 27, 19, 21), ...ring("#3c8a43", 43, 27, 16, 1.4, 28), poly("#3d8f3a", 36, 18, 40, 14, 46, 15, 50, 20, 44, 21, 43, 26, 39, 21), rect("#7a5630", 33, 22, 4, 13), rect("#7a5630", 49, 22, 4, 13), poly("#e0b237", 38, 24, 48, 24, 47, 32, 43, 35, 39, 32), rect("#4a86c0", 40, 29, 6, 3), rect("#3d8f3a", 33, 35, 20, 2), rect("#888", 38, 38, 10, 1.5)]],
  ["Bosnia & Herzegovina", [fillAll("#14128a"), poly("#fbcf1c", 20, 0, 70, 0, 70, FH), ...Array.from({ length: 9 }, (_, i) => star("#fff", 11 + i * 6.3, 2 + i * 6.5, 3.4))]],
  ["Brunei", [fillAll("#f2dc30"), poly("#f6f6f6", 0, 5, FW, 28, FW, 34, 0, 22), poly("#101010", 0, 20, FW, 33, FW, 47, 0, 33), poly("#c5222c", 41, 9, 44, 9, 44, 16, 50, 19, 44, 20, 44, 34, 47, 31, 50, 25, 50, 20, 53, 27, 51, 34, 56, 24, 58, 24, 57, 33, 52, 37, 49, 39, 51, 43, 43, 45, 35, 42, 37, 39, 32, 36, 28, 31, 27, 24, 30, 25, 34, 33, 32, 26, 35, 20, 35, 27, 39, 33, 41, 34, 41, 20, 34, 20, 41, 16), poly("#e9c433", 36, 38, 43, 41, 50, 38, 48, 40, 43, 42, 38, 40)]],
  ["Cameroon", [...cols(["#127b5e", 28], ["#d6213f", 29], ["#f0c618", 29]), star("#fce02a", 43, 27, 7.5)]],
  ["Cayman Islands", [fillAll("#241a60"), ...jack("#1a1b78", "#f01520"), disc("#3b6a3d", 67, 12, 4), shield("#eef0f5", 67, 26, 7, 13), rect("#cc2a2e", 60, 15, 14, 7), ...[24, 28].map((y) => rect("#2b59a5", 60.5, y, 13, 2)), star("#2a8a3d", 64, 26, 2), star("#2a8a3d", 70, 26, 2), poly("#d9b93a", 57, 34, 67, 38, 77, 34, 75, 39, 59, 39)]],
  ["Christmas Island", [poly("#2b8a4c", 0, 0, FW, 0, FW, FH), poly("#1a3aac", 0, 0, FW, FH, 0, FH), disc("#f3c04b", 43, 25, 8), poly("#2b8a4c", 38, 22, 43, 24, 48, 21, 45, 28, 46, 31, 42, 29, 38, 28), star("#fff", 17, 20, 3, 7), star("#fff", 7, 30, 3, 7), star("#fff", 28, 28, 3, 7), star("#fff", 17, 46, 3, 7), star("#fff", 22, 36, 2), poly("#f3c04b", 55, 27, 63, 26, 70, 20, 65, 8, 74, 14, 80, 10, 78, 20, 72, 25, 63, 28)]],

  ["Algeria", [...cols(["#108b41", 43], ["#f6f6f6", 43]), disc("#ea1f26", 44, 27, 15), disc("#108b41", 47.5, 27, 12), poly("#f6f6f6", 43, 14.5, 60, 10, 60, 44, 43, 39.5), poly("#ea1f26", 43, 10.5, 50, 12, 57, 18, 49, 14.5, 43, 15), poly("#ea1f26", 43, 43.5, 50, 42, 57, 36, 49, 39.5, 43, 39), star("#ea1f26", 49, 27, 6.5)]],
  ["Antarctica", [fillAll("#3d7fc6"), poly("#fff", 19, 17, 24, 20, 28, 23, 33, 21, 36, 12, 41, 8, 50, 8, 59, 11, 61, 18, 65, 26, 65, 34, 62, 44, 55, 50, 48, 49, 45, 43, 36, 42, 28, 38, 24, 33, 27, 28, 22, 23)]],
  ["Australia", [fillAll("#143a7e"), ...jack("#183c86", "#dc1a37"), star("#fff", 25, 40, 7.5, 7, 0.45), star("#fff", 68, 8, 4, 7, 0.45), star("#fff", 58, 22, 3.5, 7, 0.45), star("#fff", 80, 20, 3.5, 7, 0.45), star("#fff", 74, 27, 2), star("#fff", 69, 44, 4, 7, 0.45)]],
  ["Bangladesh", [fillAll("#1a6f57"), disc("#e65425", 38.5, 27, 17.5)]],
  ["Benin", [...rows(["#fad62f", 27], ["#ea1e3d", 27]), rect("#158a55", 0, 0, 34, FH)]],
  ["Botswana", rows(["#7eacd6", 19], ["#f8f8f8", 3], ["#0c0c0c", 10], ["#f8f8f8", 3], ["#7eacd6", 19])],
  ["Bulgaria", rows(["#f3f3f3", 18], ["#16a17a", 18], ["#d93b26", 18])],
  ["Canada", [...cols(["#e60c0f", 22], ["#f8f8f8", 42], ["#e60c0f", 22]), poly("#ea1a1a", 43, 8, 47, 14, 51, 12, 50, 21, 55, 17, 56, 20, 60, 19, 58, 24, 60, 26, 51, 33, 52, 36, 44, 35, 44, 45, 42, 45, 42, 35, 34, 36, 35, 33, 26, 26, 28, 24, 26, 19, 30, 20, 31, 17, 36, 21, 35, 12, 39, 14)]],
  ["Central African Republic", [...rows(["#123a86", 13], ["#f6f6f6", 14], ["#2f9638", 14], ["#f6cd17", 13]), rect("#d4234c", 36, 0, 14, FH), star("#f8d62a", 13, 7, 5.5)]],
  ["Cocos Islands", [fillAll("#1f8a28"), disc("#f2ce30", 14, 14, 10), poly("#2d7a34", 8, 9, 14, 7, 20, 10, 18, 15, 10, 15), rect("#8a3a25", 12, 13, 4, 10), disc("#f9e04e", 43, 26, 10), disc("#1f8a28", 47, 26, 8.5), star("#f9e04e", 57, 22, 3, 7), star("#f9e04e", 70, 8, 3.5, 7), star("#f9e04e", 70, 43, 3.5, 7)]],

  ["American Samoa", [fillAll("#191a6c"), poly("#cc2038", FW, 0, 5, 27, FW, FH), poly("#f8f8f8", FW, 4, 14, 27, FW, 50), poly("#90492c", 62, 16, 70, 9, 82, 6, 80, 16, 78, 22, 72, 26, 62, 27), poly("#fff", 57, 24, 62, 17, 66, 25, 64, 32, 57, 29), poly("#e2bb3c", 55, 31, 62, 30, 70, 34, 78, 32, 72, 40, 64, 39), poly("#b0b4c0", 74, 22, 84, 17, 84, 20, 76, 25)]],
  ["Antigua & Barbuda", [...rows(["#0d0d0d", 20], ["#2486cf", 13], ["#f8f8f8", 21]), star("#fbdd38", 43, 20, 14.5, 16, 0.62), rect("#2486cf", 15, 21, 56, 12), poly("#cf1f36", 0, 0, 43, FH, 0, FH), poly("#cf1f36", FW, 0, 43, FH, FW, FH)]],
  ["Austria", rows(["#ea3a38", 18], ["#f4f4f4", 18], ["#ea3a38", 18])],
  ["Barbados", [...cols(["#10327c", 28], ["#fccb3f", 30], ["#10327c", 28]), poly("#0c0c0c", 43, 10, 46, 17, 44.5, 17, 44.5, 29, 50, 27, 50, 17, 48, 17, 55, 12, 54, 18, 53, 30, 44.5, 33, 44.5, 41, 41.5, 41, 41.5, 33, 33, 30, 32, 18, 31, 12, 38, 17, 36, 17, 36, 27, 41.5, 29, 41.5, 17, 40, 17)]],
  ["Bermuda", [fillAll("#c91518"), ...jack("#1b1e8c", "#d81628"), shield("#1a1a1a", 68, 27, 12, 17), shield("#dfe8ec", 68, 27, 11, 16), poly("#1f9a4a", 58, 30, 78, 30, 74, 38, 68, 42, 62, 38), poly("#c8252a", 65, 14, 71, 14, 71, 20, 76, 27, 73, 34, 68, 37, 63, 34, 60, 27, 65, 20), rect("#6ab6d8", 64, 22, 8, 6), poly("#8a6a40", 63, 29, 68, 24, 73, 29)]],
  ["Brazil", [fillAll("#0d9c50"), poly("#f8cf34", 12, 27, 43, 8, 74, 27, 43, 46), disc("#4a4fa8", 43, 27, 12.5), poly("#cfe8da", 31, 23, 38, 21, 48, 24, 55, 29, 55, 31, 47, 27, 38, 24, 31, 25), ...[[36, 31], [40, 34], [44, 31], [47, 35], [43, 37], [50, 33]].map(([x, y]) => disc("#fff", x, y, 0.7))]],
  ["Burkina Faso", [...rows(["#ee3437", 27], ["#14a04b", 27]), star("#fbdb3a", 43, 27, 9)]],
  ["Canary Islands", [...cols(["#f3f3f3", 28], ["#1f78b8", 29], ["#f6c614", 29]), poly("#e6e4dd", 39, 20, 47, 20, 47, 31, 43, 35, 39, 31), ...[22, 26, 30].flatMap((y) => [disc("#2a62b0", 41.5, y, 1.2), disc("#2a62b0", 45, y, 1.2)]), poly("#d9965c", 39, 17, 43, 14, 47, 17, 46, 20, 40, 20), poly("#cfa078", 36, 24, 37, 30, 33, 37, 34, 29), poly("#cfa078", 50, 24, 49, 30, 53, 37, 52, 29)]],
  ["Chad", cols(["#0c2c66", 28], ["#fbd224", 30], ["#ca1435", 28])],
  ["Colombia", rows(["#fad030", 27], ["#144aa8", 13], ["#cc1f36", 14])],
];

const OUTLINE = waved([[0, 0], [FW, 0], [FW, FH], [0, FH]]);

const FlagDefs = styled.svg`
  position: absolute;
  width: 0;
  height: 0;
`;

const SharedFlagDefs = () => (
  <FlagDefs aria-hidden="true">
    <defs>
      <clipPath id="flag-cloth"><path d={OUTLINE} /></clipPath>
      <linearGradient id="flag-fold" x1="0" x2="1" y1="0" y2="0">
        <stop offset="0" stopColor="#000" stopOpacity="0.18" />
        <stop offset="0.12" stopColor="#000" stopOpacity="0.05" />
        <stop offset="0.4" stopColor="#fff" stopOpacity="0.12" />
        <stop offset="0.68" stopColor="#fff" stopOpacity="0.04" />
        <stop offset="0.9" stopColor="#000" stopOpacity="0.14" />
        <stop offset="1" stopColor="#000" stopOpacity="0.3" />
      </linearGradient>
    </defs>
  </FlagDefs>
);

const Flag = ({ layers, width, height, label }: { layers: Layer[]; width: number; height: number; label?: string }) => (
  <svg viewBox="0 0 86 61" width={width} height={height} role={label ? "img" : undefined} aria-label={label} aria-hidden={label ? undefined : true}>
    <g clipPath="url(#flag-cloth)">
      {layers.map((l, i) => <path key={i} d={l.d} fill={l.c} />)}
      <path d={OUTLINE} fill="url(#flag-fold)" />
      <path d={waved([[0, FH - 3], [FW, FH - 3], [FW, FH], [0, FH]])} fill="#000" opacity="0.16" />
      <path d={waved([[0, 0], [FW, 0], [FW, 2], [0, 2]])} fill="#fff" opacity="0.2" />
      <path d={OUTLINE} fill="none" stroke="#000" strokeOpacity="0.28" strokeWidth="2" />
    </g>
  </svg>
);

/* ---------- page ---------- */

const Page = styled.div`
  display: flex;
  flex-direction: column;
  min-height: 100vh;
  overflow: hidden;
`;

const Header = styled.header`
  background: #f7f6f6;
  border-bottom: 1px solid #a3a2a5;
`;

const StatusBar = styled.div`
  display: grid;
  grid-template-columns: 1fr auto 1fr;
  align-items: center;
  height: 62px;
  padding: 0 17px 0 18px;
  font-size: 36px;
  color: #000;
`;

const Carrier = styled.div`
  display: flex;
  align-items: center;
  gap: 14px;
`;

const Clock = styled.time`
  font-weight: 600;
`;

const Battery = styled.svg`
  justify-self: end;
`;

const NavBar = styled.nav`
  display: grid;
  grid-template-columns: 1fr auto 1fr;
  align-items: center;
  height: 130px;
  padding: 0 36px;
  color: ${GREEN};
`;

const BackLink = styled.a`
  display: flex;
  align-items: center;
  gap: 16px;
  font-size: 48px;
  color: inherit;
  text-decoration: none;
`;

const Title = styled.h1`
  margin: 0;
  font-size: 50px;
  font-weight: 600;
`;

const Stage = styled.main`
  position: relative;
  display: flex;
  flex: 1;
  flex-direction: column;
`;

const Messages = styled.section`
  position: relative;
  display: flex;
  flex: 1;
  flex-direction: column;
  align-items: flex-start;
  gap: 30px;
  padding: 32px 30px 0;
`;

const DateLabel = styled.time`
  align-self: center;
  margin-bottom: -7px;
  font-size: 37px;
  line-height: 44px;
  font-weight: 600;
  color: #aaa;
`;

const Bubble = styled.article<{ $mine?: boolean }>`
  display: flex;
  flex-direction: ${(p) => (p.$mine ? "row" : "column")};
  align-self: ${(p) => (p.$mine ? "flex-end" : "flex-start")};
  align-items: ${(p) => (p.$mine ? "center" : "flex-start")};
  gap: ${(p) => (p.$mine ? "10px" : "14px")};
  min-height: 123px;
  padding: ${(p) => (p.$mine ? "0 47px" : "24px 44px 29px 42px")};
  border-radius: 45px;
  background: ${(p) => (p.$mine ? GREEN : "#fff")};
`;

const Author = styled.h2`
  margin: 0;
  font-size: 37px;
  line-height: 44px;
  font-weight: 600;
  color: #6a6a6a;
`;

const Body = styled.p`
  margin: 0;
  font-size: 41px;
  line-height: 52px;
  color: #6a6a6a;
`;

const Composer = styled.form`
  position: relative;
  display: flex;
  align-items: center;
  gap: 30px;
  padding: 21px 33px 20px 30px;
  border-top: 1px solid #a8a8a8;
`;

const Field = styled.label`
  position: relative;
  flex: 1;
  min-width: 0;
`;

const MessageInput = styled.input`
  display: block;
  width: 100%;
  height: 90px;
  padding: 0 34px;
  border: 0;
  border-radius: 24px;
  outline: 0;
  background: rgba(0, 0, 0, 0.095);
  font-size: 44px;
  caret-color: transparent;
  &::placeholder { color: #aaa; opacity: 1; }
`;

const Caret = styled.span`
  position: absolute;
  top: 15px;
  left: 30px;
  width: 6px;
  height: 60px;
  border-radius: 3px;
  background: #4169f5;
`;

const SendButton = styled.button`
  font-size: 48px;
  font-weight: 600;
  color: #d9d9da;
`;

const Keyboard = styled.section`
  padding: 16px 0 30px;
  background: linear-gradient(90deg, #ecedf0, #e9edef);
`;

const GroupTitle = styled.h2`
  margin: 0 0 33px 36px;
  font-size: 38px;
  line-height: 46px;
  font-weight: 600;
  color: #a5a8ac;
`;

const FlagGrid = styled.div`
  display: grid;
  grid-template-columns: repeat(10, 86px);
  gap: 59px 40px;
  padding-left: 37px;
  overflow: hidden;
`;

const FlagKey = styled.button`
  height: 61px;
  svg { display: block; }
`;

const KeyRow = styled.div`
  display: grid;
  grid-template-columns: 171px 1fr 171px;
  align-items: center;
  margin-top: 57px;
`;

const TextKey = styled.button`
  height: 90px;
  padding-left: 6px;
  font-size: 42px;
  color: #505a61;
`;

const Categories = styled.div`
  display: grid;
  grid-template-columns: repeat(9, 1fr);
  justify-items: center;
`;

const CategoryKey = styled.button<{ $active?: boolean }>`
  display: grid;
  place-items: center;
  width: 90px;
  height: 90px;
  border-radius: 50%;
  color: ${(p) => (p.$active ? "#4b5763" : "#b0b3bb")};
  background: ${(p) => (p.$active ? "#d0d7da" : "transparent")};
  svg { overflow: visible; }
`;

const DeleteKey = styled.button`
  display: grid;
  place-items: center;
  height: 90px;
  padding-left: 10px;
  color: #505960;
`;

const CATEGORIES: [string, React.ReactNode][] = [
  ["Recent", <><circle cx="24" cy="24" r="22.7" /><path d="M24.5 6v18.5H12" /></>],
  ["Smileys", <><circle cx="24" cy="24" r="22.7" /><g fill="currentColor" stroke="none"><ellipse cx="16.7" cy="18.3" rx="2.3" ry="3.1" /><ellipse cx="30.8" cy="18.3" rx="2.3" ry="3.1" /><path d="M12.5 35.500Q24 39.5 35.5 35.5Q32 42 24 42T12.5 35.5Z" /></g><path d="M10.5 28.5Q24 32.5 37.8 28.5C37.5 37 32 41.5 24 41.5S10.5 37 10.5 28.5Z" /></>],
  ["Animals", <><path d="M24.2 5.5C33 5.5 38 11 40.5 19.5 43 23 46.8 26 46.8 31c0 6-5 10.5-11.3 10.3C33 45 28.5 46.8 24.2 46.8S15.5 45 13 41.3C6.5 41.5 1.3 37 1.3 31c0-5 3.7-8 6.2-11.500C10 11 15.5 5.5 24.2 5.5Z" /><path d="M7 19.5C1 12 1 1.3 9.5 1.3c3.5 0 6 1.8 7.5 5M41 19.5c6-7.500 6-18.200-2.500-18.200-3.500 0-6 1.800-7.500 5" /><g fill="currentColor" stroke="none"><ellipse cx="15" cy="25" rx="2.1" ry="3.2" /><ellipse cx="33" cy="25" rx="2.1" ry="3.2" /><path d="M19.6 32.5q0-1.500 1.500-1.500h6q1.500 0 1.500 1.500 0 2-4.500 4.500-4.500-2.500-4.500-4.500Z" /></g><path strokeWidth="1.6" d="M24 36v4M19 39q0 2.500 2.500 2.500T24 39.5q0 2 2.500 2T29 39" /></>],
  ["Food", <><path d="M23.5 21V12.2H1.5L5 46.7H9M20.2 11.5l1.7-10 8.6 3" /><path d="M9 27q1-5.500 12-5.500h13q11 0 12 5.500 0 4.700-4 4.700H13q-4 0-4-4.700Z" /><path d="M10 41.3h35q2 0 2 2.700t-3 2.700H11q-3 0-3-2.700t2-2.700Z" /><path fill="currentColor" stroke="none" d="M12 33h31q4 1 4.500 8H7.5q.5-7 4.500-8Z" /><path stroke="#ebedf0" strokeWidth="1.5" d="M11 35l17 4.500L45 35" /></>],
  ["Activity", <><circle cx="24" cy="24" r="22.7" /><path strokeWidth="1.5" d="M20 9l9-4M20 20l10 3M11 22v12M27 24l-7 8M20 32l-7 4M20 32l10 4M37 23l9-4M36 30l3 8M30 22l4-9M30 36v4" /><g fill="currentColor" stroke="none"><path d="M10 11l9-1 1 9-8 5-7-5ZM29 20l8 2-1 8-8 2-4-6ZM27 1l12 5 1 6-6 3-8-8ZM11 34l9 5 1 7-8-2-6-7ZM35 37l7-3-6 9-6 1ZM1 20l4 4-1 8-3-3ZM42 14h3l2 8-3-1ZM12 4l8-2-3 4Z" /></g></>],
  ["Travel", <><path d="M1.5 45V18.8H11.5V1.5H29.7V13.3H46.5V45" /><path d="M12.5 33C12.5 24 15 21.3 20 21.3h8.500c5 0 7.500 2.700 7.500 11.700" /><path d="M8.7 38.5v4.700H40V38.5" /><path fill="currentColor" stroke="none" d="M7.5 32h6v-1h21.500v1h6v8H7.5ZM9.3 44h6v4h-6ZM33 44h6v4h-6ZM15.8 6h3.200v3.200h-3.200ZM22 6h3.200v3.200H22ZM15.8 12h3.200v3.200h-3.200ZM22 12h3.200v3.200H22ZM6 24h3.200v3.200H6ZM39 18h3.200v3.200H39ZM39 24h3.200v3.200H39Z" /><circle cx="12" cy="36" r="2.4" fill="#ebedf0" stroke="none" /><circle cx="36.5" cy="36" r="2.4" fill="#ebedf0" stroke="none" /></>],
  ["Objects", <><path d="M18 36.5C18 29 8.2 24.5 8.2 15.7 8.2 7.5 15 1.3 24 1.3S39.8 7.5 39.8 15.7C39.8 24.5 30 29 30 36.5V44q0 2.700-2.500 2.700h-7Q18 46.7 18 44ZM18 37.2H30M20 42h4.500" /><path strokeWidth="1.8" d="M24.2 34V27l-4-4M24.2 27l4-4" /><circle cx="19.7" cy="22.5" r="1" /><circle cx="28.8" cy="22.5" r="1" /></>],
  ["Symbols", <><path strokeWidth="3" d="M2 3.5H23M2 9.5H23M12.5 9.5V23" /><path d="M34.7 1V19" /><path fill="currentColor" stroke="none" d="M34 0c1 6 9 6 8 13q-1 4-3 5 1-7-5-9Z" /><ellipse cx="31" cy="19" rx="5" ry="4" fill="currentColor" stroke="none" /><g fill="currentColor" stroke="none" fontFamily="Inter, sans-serif" fontSize="26"><text x="2" y="47">&amp;</text><text x="24" y="47">%</text></g></>],
  ["Flags", <path d="M8.5 4V46M8.5 7C14 10.5 18 9 23 6.2 29 3 34 3.5 38.5 6.5V29C34 25.5 29 24.5 23 27.5 18 30 14 30.5 8.5 28" />],
];

const BRAZIL = FLAGS.find(([name]) => name === "Brazil")![1];

export default function App() {
  return (
    <Page>
      <GlobalStyle />
      <SharedFlagDefs />
      <Header>
        <StatusBar>
          <Carrier>
            Carrier
            <svg width="38" height="28" viewBox="0 0 38 28" aria-label="Wi-Fi" role="img">
              <g fill="none" stroke="#000" strokeWidth="5"><path d="M2 10.5Q19-5 36 10.5" /><path d="M8 17Q19 7.5 30 17" /></g>
              <path d="M12.5 21.5Q19 16.5 25.5 21.5L19 28Z" />
            </svg>
          </Carrier>
          <Clock>8:41 PM</Clock>
          <Battery width="74" height="30" viewBox="0 0 74 30" aria-label="Battery full" role="img">
            <rect x="1" y="1" width="66" height="28" rx="5" fill="none" stroke="#000" strokeWidth="2" />
            <rect x="3" y="3" width="62" height="24" rx="3" />
            <path d="M70 10q4 1 4 5t-4 5Z" />
          </Battery>
        </StatusBar>
        <NavBar>
          <BackLink href="#discover">
            <svg width="40" height="64" viewBox="0 0 40 64" aria-hidden="true">
              <path d="M36 3.5L7 32l29 28.5" fill="none" stroke="currentColor" strokeWidth="8" />
            </svg>
            Discover
          </BackLink>
          <Title>Basketball</Title>
        </NavBar>
      </Header>

      <Stage>
        <Wallpaper />
        <Messages>
          <DateLabel>Today at 8:40 PM</DateLabel>
          <Bubble>
            <Author>Frank_6p2xi5v</Author>
            <Body>Hi guys</Body>
          </Bubble>
          <Bubble>
            <Author>Cornelia_sqdvkil</Author>
            <Body>Who will win?</Body>
          </Bubble>
          <Bubble $mine>
            {[0, 1, 2].map((i) => <Flag key={i} layers={BRAZIL} width={47} height={33} label="Flag of Brazil" />)}
          </Bubble>
        </Messages>
        <Composer onSubmit={(e) => e.preventDefault()}>
          <Field>
            <MessageInput type="text" aria-label="Message" placeholder="Type a message..." />
            <Caret />
          </Field>
          <SendButton type="submit">Send</SendButton>
        </Composer>
      </Stage>

      <Keyboard aria-label="Emoji keyboard">
        <GroupTitle>FLAGS</GroupTitle>
        <FlagGrid>
          {FLAGS.map(([name, layers]) => (
            <FlagKey key={name} type="button" aria-label={name}>
              <Flag layers={layers} width={86} height={61} />
            </FlagKey>
          ))}
        </FlagGrid>
        <KeyRow>
          <TextKey type="button">ABC</TextKey>
          <Categories>
            {CATEGORIES.map(([name, art]) => (
              <CategoryKey key={name} type="button" aria-label={name} $active={name === "Flags"}>
                <svg width="48" height="48" viewBox="0 0 48 48" fill="none" stroke="currentColor" strokeWidth="2.5" aria-hidden="true">{art}</svg>
              </CategoryKey>
            ))}
          </Categories>
          <DeleteKey type="button" aria-label="Delete">
            <svg width="70" height="50" viewBox="0 0 70 50" fill="none" stroke="currentColor" strokeWidth="4" strokeLinecap="round" strokeLinejoin="round" aria-hidden="true">
              <path d="M28 2H58Q68 2 68 12V38Q68 48 58 48H28Q25 48 23 45.5L3 27.5Q1 25 3 22.5L23 4.5Q25 2 28 2Z" />
              <path strokeWidth="3" d="M32 15L52.5 35.5M52.5 15L32 35.5" />
            </svg>
          </DeleteKey>
        </KeyRow>
      </Keyboard>
    </Page>
  );
}
